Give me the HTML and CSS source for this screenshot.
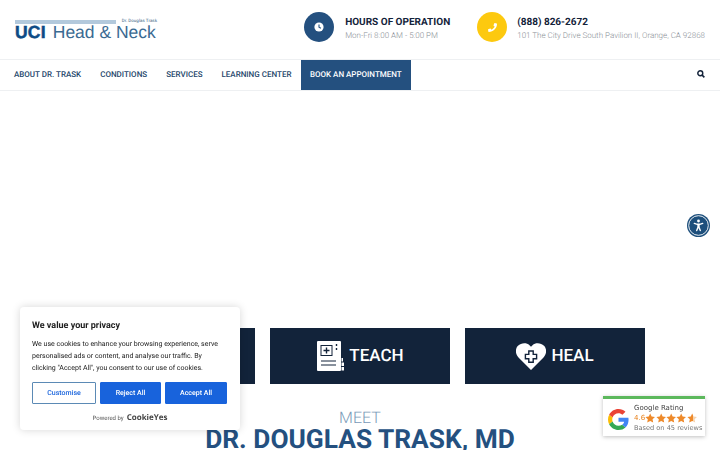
FILE: index.html
```html
<!DOCTYPE html>
<html lang="en">
<head>
<meta charset="utf-8">
<title>UCI Head &amp; Neck - Dr. Douglas Trask</title>
<link rel="stylesheet" href="styles.css">
</head>
<body>
<svg class="defs" width="0" height="0"><defs>
  <linearGradient id="half"><stop offset="55%" stop-color="#ee8a2b"/><stop offset="55%" stop-color="#f6d3ae"/></linearGradient>
  <symbol id="star" viewBox="0 0 20 20"><path d="M10 .8 12.900 7 19.600 7.800 14.700 12.400 16 19.100 10 15.800 4 19.100 5.300 12.400.4 7.800 7.100 7Z"/></symbol>
</defs></svg>
<header class="top">
  <div class="logo">
    <div class="logo-top"><span class="logo-bar"></span><span class="logo-dr">Dr. Douglas Trask</span></div>
    <div class="logo-main"><b>UCI</b><span>Head &amp; Neck</span></div>
  </div>
  <div class="contact">
    <div class="info hours">
      <span class="disc disc-blue">
        <svg width="10" height="10" viewBox="0 0 10 10"><circle cx="5" cy="5" r="4.600" fill="#fff"/><path d="M5 2.400V5.200L6.900 6.300" fill="none" stroke="#24507f" stroke-width="1.100"/></svg>
      </span>
      <div class="info-text"><h4>HOURS OF OPERATION</h4><p>Mon-Fri 8:00 AM - 5:00 PM</p></div>
    </div>
    <div class="info phone">
      <span class="disc disc-yellow">
        <svg width="9" height="9" viewBox="0 0 512 512"><path fill="#fff" d="M493 24 389 0c-11-3-23 3-27 14l-48 112c-4 10-1 21 7 28l60 49c-36 77-99 141-178 178l-49-60c-7-8-18-11-28-7L14 362c-11 5-17 17-14 28l24 104c2 10 12 18 23 18 256 0 465-207 465-465 0-11-7-21-19-23z"/></svg>
      </span>
      <div class="info-text"><h4>(888) 826-2672</h4><p>101 The City Drive South Pavilion II, Orange, CA 92868</p></div>
    </div>
  </div>
</header>
<nav class="nav">
  <a href="#">ABOUT DR. TRASK</a>
  <a href="#">CONDITIONS</a>
  <a href="#">SERVICES</a>
  <a href="#">LEARNING CENTER</a>
  <a href="#" class="book">BOOK AN APPOINTMENT</a>
  <svg class="search" width="8" height="8" viewBox="0 0 10 10"><circle cx="4.100" cy="4.100" r="3.100" fill="none" stroke="#14233a" stroke-width="1.800"/><path d="M6.400 6.400 9.200 9.200" stroke="#14233a" stroke-width="2"/></svg>
</nav>
<main>
  <section class="cards">
    <div class="card"></div>
    <div class="card">
      <svg class="teach-icon" width="27" height="30" viewBox="0 0 27 30"><path fill="#fff" d="M1 0H23a1 1 0 0 1 1 1V29a1 1 0 0 1-1 1H1a1 1 0 0 1-1-1V1a1 1 0 0 1 1-1Z"/><rect x="4" y="4.500" width="11" height="10" fill="none" stroke="#12233a" stroke-width="1"/><path d="M9.500 6.500v6M6.500 9.500h6" stroke="#12233a" stroke-width="1.400"/><path d="M4 20h15M4 24h15" stroke="#12233a" stroke-width="1"/><path d="M19.500 3v2M19.500 7v2" stroke="#12233a" stroke-width="1.400"/><rect x="24.500" y="17" width="1.500" height="3.500" fill="#fff"/><rect x="24.500" y="21.500" width="2.500" height="3.500" fill="#fff"/><rect x="24.500" y="26" width="2.500" height="3.500" fill="#fff"/></svg>
      <span>TEACH</span>
    </div>
    <div class="card">
      <svg width="30" height="27" viewBox="0 0 30 27"><path fill="#fff" d="M15 27 2.500 14.500C-1 11-.8 5.500 2 2.700 5-.3 10.500-.8 13.500 2.200L15 3.800l1.500-1.600C19.500-.8 25-.3 28 2.700c2.800 2.800 3 8.300-.5 11.800Z"/><path fill="none" stroke="#12233a" stroke-width="1.400" d="M12.800 8h4.400v3.400h3.400v4.400h-3.400v3.400h-4.400v-3.400H9.400v-4.400h3.400Z"/></svg>
      <span>HEAL</span>
    </div>
  </section>
  <section class="meet">
    <p>MEET</p>
    <h1>DR. DOUGLAS TRASK, MD</h1>
  </section>
</main>

<aside class="cookie">
  <h3>We value your privacy</h3>
  <p>We use cookies to enhance your browsing experience, serve personalised ads or content, and analyse our traffic. By clicking "Accept All", you consent to our use of cookies.</p>
  <div class="cookie-btns">
    <button class="btn btn-line">Customise</button>
    <button class="btn">Reject All</button>
    <button class="btn">Accept All</button>
  </div>
  <div class="powered"><span>Powered by</span><b>CookieYes</b></div>
</aside>

<aside class="rating">
  <svg class="g" width="21" height="21" viewBox="0 0 48 48"><path fill="#EA4335" d="M24 9.500c3.500 0 6.700 1.300 9.100 3.500l6.800-6.800C35.800 2.400 30.200 0 24 0 14.600 0 6.500 5.400 2.600 13.200l7.900 6.200C12.400 13.700 17.700 9.500 24 9.500z"/><path fill="#4285F4" d="M47 24.500c0-1.600-.2-3.100-.4-4.500H24v9h12.900c-.6 3-2.200 5.500-4.700 7.200l7.700 6C44.400 38 47 31.800 47 24.500z"/><path fill="#FBBC05" d="M10.500 28.600c-.5-1.400-.8-3-.8-4.600s.3-3.200.8-4.600l-7.900-6.200C.9 16.500 0 20.100 0 24s.9 7.500 2.600 10.800z"/><path fill="#34A853" d="M24 48c6.500 0 11.900-2.100 15.900-5.800l-7.700-6c-2.100 1.400-4.900 2.300-8.200 2.300-6.300 0-11.600-4.200-13.500-9.900l-7.900 6.200C6.500 42.600 14.600 48 24 48z"/></svg>
  <div class="rating-text">
    <div class="rating-title">Google Rating</div>
    <div class="rating-score">4.6
      <span class="stars">
        <svg class="star"><use href="#star"/></svg><svg class="star"><use href="#star"/></svg><svg class="star"><use href="#star"/></svg><svg class="star"><use href="#star"/></svg><svg class="star star-half"><use href="#star"/></svg>
      </span>
    </div>
    <div class="rating-note">Based on 45 reviews</div>
  </div>
</aside>

<button class="access" aria-label="Accessibility">
  <svg width="23" height="23" viewBox="0 0 23 23"><circle cx="11.500" cy="11.500" r="11.500" fill="#1d4f7c"/><circle cx="11.500" cy="11.500" r="9.800" fill="none" stroke="#fff" stroke-width=".9"/><circle cx="11.500" cy="7" r="1.400" fill="#fff"/><path fill="none" stroke="#fff" stroke-width="1.400" stroke-linecap="round" d="M7.300 9.400 10.200 10.300h2.600l2.900-.9M11 10.500v2.800L9.700 16.500M12 10.500v2.800l1.300 3.200"/></svg>
</button>
</body>
</html>
```
FILE: styles.css
```css
* { box-sizing: border-box; }
html, body { margin: 0; height: 450px; overflow: hidden; background: #fff; }
body { font-family: Roboto, "Liberation Sans", sans-serif; color: #14233a; text-rendering: geometricPrecision; }
.defs { position: absolute; }

.top { height: 59px; display: flex; justify-content: space-between; align-items: flex-start; padding: 12px 15px 0; }
.logo { width: 142px; margin-top: 8px; color: #1d4f7c; }
.logo-top { display: flex; align-items: center; justify-content: space-between; height: 4px; }
.logo-bar { width: 101px; height: 4px; background: #b3c9dc; }
.logo-dr { font-size: 4.500px; line-height: 4px; font-weight: 500; color: #6b879f; white-space: nowrap; }
.logo-main { display: flex; align-items: baseline; gap: 7px; line-height: 16px; height: 16px; font-family: "Liberation Sans", sans-serif; white-space: nowrap; }
.logo-main b { font-size: 17.500px; font-weight: 700; color: #0d4b86; -webkit-text-stroke: .5px #0d4b86; letter-spacing: .2px; }
.logo-main span { font-size: 17.500px; color: #3a6a92; }

.contact { display: flex; gap: 27px; }
.info { display: flex; align-items: flex-start; gap: 10px; }
.hours { gap: 11px; }
.disc { width: 30px; height: 30px; border-radius: 50%; display: flex; align-items: center; justify-content: center; }
.disc-blue { background: #24507f; }
.disc-yellow { background: #fdc90f; }
.info-text { padding-top: 5px; }
.info h4 { margin: 0; font-size: 10px; line-height: 12px; font-weight: 700; color: #14233a; }
.info p { margin: 2px 0 0; font-size: 8px; line-height: 10px; font-weight: 300; color: #8a8f96; }

.nav { height: 32px; display: flex; align-items: stretch; padding-left: 4.500px; padding-right: 15px; border-top: 1px solid #eef0f2; border-bottom: 1px solid #eef0f2; }
.nav a { display: flex; align-items: center; padding: 0 9.500px 1px; font-size: 8px; font-weight: 500; color: #24466b; text-decoration: none; white-space: nowrap; }
.nav .book { background: #24507f; color: #fff; height: 30px; padding: 0 9px 1px; }
.search { margin: 10px 0 auto auto; }

main { padding-top: 237px; }
.cards { display: grid; grid-template-columns: repeat(3, 180px); gap: 15px; justify-content: center; }
.card { height: 56px; background: #12233a; color: #fff; display: flex; align-items: center; justify-content: center; gap: 5px; font-size: 17px; font-weight: 500; }
.card span { padding-bottom: 1px; }
.teach-icon { margin-left: 1px; }
.meet { margin-top: 26px; text-align: center; }
.meet p { margin: 0; font-size: 16px; line-height: 16px; font-weight: 300; color: #7a9ab8; }
.meet h1 { margin: 0; font-size: 26.300px; line-height: 28px; font-weight: 700; color: #24507f; white-space: nowrap; }

.cookie { position: fixed; left: 20px; top: 307px; width: 220px; height: 123px; padding: 13px 12px 0; background: #fff; border-radius: 4px; box-shadow: 0 0 8px rgba(0,0,0,.16); }
.cookie h3 { margin: 0; font-size: 9px; line-height: 12px; font-weight: 700; color: #212121; }
.cookie p { margin: 6px 0 0; width: 190px; font-size: 7px; line-height: 12px; color: #212121; }
.cookie-btns { display: flex; gap: 4px; margin-top: 8px; }
.btn { flex: 0 0 61px; height: 22px; padding: 0; border: 1px solid #1863dc; border-radius: 1px; background: #1863dc; color: #fff; font: 500 7px Roboto, sans-serif; text-rendering: geometricPrecision; }
.btn + .btn + .btn { flex-basis: 62px; }
.btn-line { flex-basis: 64px; background: #fff; color: #1863dc; border: 1.500px solid #5b8ab5; }
.powered { display: flex; justify-content: center; align-items: baseline; gap: 3px; margin-top: 8px; }
.powered span { font-size: 6px; color: #555; }
.powered b { font-size: 8px; font-weight: 700; color: #444; font-family: "Open Sans", sans-serif; }

.rating { position: fixed; left: 603px; top: 396px; width: 102px; height: 40px; padding: 1px 3px 0 5px; display: flex; gap: 5px; align-items: center; background: #fff; border-top: 3px solid #5cb85c; box-shadow: 0 1px 4px rgba(0,0,0,.25); font-family: "DejaVu Sans", sans-serif; }
.g { flex: none; margin-top: 2px; }
.rating-text { display: flex; flex-direction: column; white-space: nowrap; }
.rating-title { font-size: 7px; line-height: 10px; color: #444; }
.rating-score { display: flex; align-items: center; gap: 0; font-size: 7px; line-height: 10px; color: #e7811b; }
.stars { display: flex; }
.star { width: 10.400px; height: 10px; fill: #ee8a2b; }
.star-half { fill: url(#half); }
.rating-note { font-size: 6.600px; line-height: 11px; color: #777; }

.access { position: fixed; left: 687px; top: 214px; width: 23px; height: 23px; padding: 0; border: 0; background: none; line-height: 0; }
```
